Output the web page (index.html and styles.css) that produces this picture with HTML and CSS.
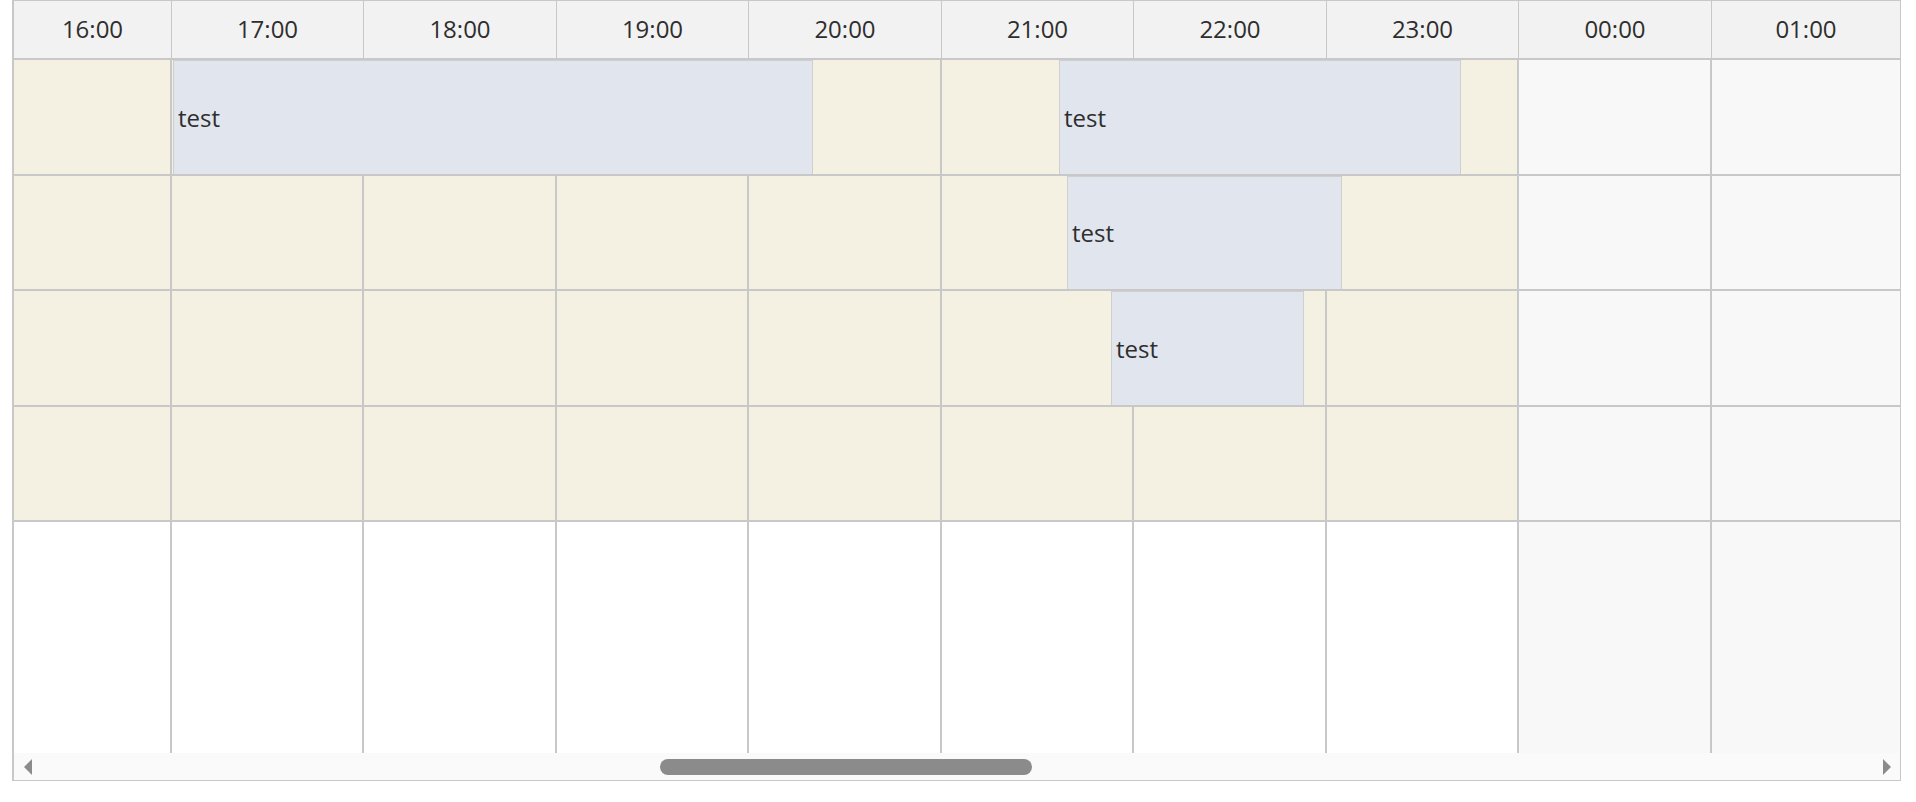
FILE: index.html
```html
<!DOCTYPE html>
<html>
<head>
<meta charset="utf-8">
<link rel="stylesheet" href="styles.css">
</head>
<body>
<div class="scheduler">
  <div class="head grid">
    <div class="hcell">16:00</div>
    <div class="hcell">17:00</div>
    <div class="hcell">18:00</div>
    <div class="hcell">19:00</div>
    <div class="hcell">20:00</div>
    <div class="hcell">21:00</div>
    <div class="hcell">22:00</div>
    <div class="hcell">23:00</div>
    <div class="hcell">00:00</div>
    <div class="hcell last">01:00</div>
  </div>
  <div class="content">
    <div class="row grid tall">
      <div class="cell work"></div><div class="cell work"></div><div class="cell work"></div><div class="cell work"></div><div class="cell work"></div><div class="cell work"></div><div class="cell work"></div><div class="cell work"></div><div class="cell off"></div><div class="cell off last"></div>
      <div class="event" style="left:159px;width:640px">test</div>
      <div class="event" style="left:1045px;width:402px">test</div>
    </div>
    <div class="row grid short">
      <div class="cell work"></div><div class="cell work"></div><div class="cell work"></div><div class="cell work"></div><div class="cell work"></div><div class="cell work"></div><div class="cell work"></div><div class="cell work"></div><div class="cell off"></div><div class="cell off last"></div>
      <div class="event" style="left:1053px;width:275px">test</div>
    </div>
    <div class="row grid tall">
      <div class="cell work"></div><div class="cell work"></div><div class="cell work"></div><div class="cell work"></div><div class="cell work"></div><div class="cell work"></div><div class="cell work"></div><div class="cell work"></div><div class="cell off"></div><div class="cell off last"></div>
      <div class="event" style="left:1097px;width:193px">test</div>
    </div>
    <div class="row grid short">
      <div class="cell work"></div><div class="cell work"></div><div class="cell work"></div><div class="cell work"></div><div class="cell work"></div><div class="cell work"></div><div class="cell work"></div><div class="cell work"></div><div class="cell off"></div><div class="cell off last"></div>
    </div>
    <div class="filler grid">
      <div class="cell"></div><div class="cell"></div><div class="cell"></div><div class="cell"></div><div class="cell"></div><div class="cell"></div><div class="cell"></div><div class="cell"></div><div class="cell off"></div><div class="cell off last"></div>
    </div>
  </div>
  <div class="hscroll">
    <span class="arrow arrow-left"></span>
    <span class="track"><span class="thumb"></span></span>
    <span class="arrow arrow-right"></span>
  </div>
</div>
</body>
</html>
```
FILE: styles.css
```css
* { box-sizing: border-box; }
html, body { margin: 0; padding: 0; background: #ffffff; }
body {
  font-family: "Open Sans", "Liberation Sans", sans-serif;
  font-size: 24px;
  color: #2e2e2e;
}
.scheduler {
  margin-left: 12px;
  width: 1889px;
  border-top: 1px solid #c8c8c8;
  border-left: 2px solid #c8c8c8;
  border-right: 1px solid #c8c8c8;
  border-bottom: 1px solid #c8c8c8;
  background: #ffffff;
}
.grid {
  display: grid;
  grid-template-columns: 158px 192px 193px 192px 193px 192px 193px 192px 193px 1fr;
}
.head {
  height: 59px;
  background: #f2f2f2;
  border-bottom: 2px solid #c8c8c8;
}
.hcell {
  display: flex;
  align-items: center;
  justify-content: center;
  border-right: 1px solid #c8c8c8;
  line-height: 1;
  padding-bottom: 1px;
}
.hcell.last { border-right: none; }
.row {
  position: relative;
  border-bottom: 2px solid #c8c8c8;
}
.row.tall { height: 116px; }
.row.short { height: 115px; }
.filler { height: 231px; }
.cell {
  border-right: 2px solid #c8c8c8;
  background: #ffffff;
}
.cell.work { background: #f4f1e2; }
.cell.off { background: #f8f8f8; }
.cell.last { border-right: none; }
.event {
  position: absolute;
  top: 0;
  bottom: 0;
  background: #e1e5ee;
  border: 1px solid #cfcfcf;
  border-bottom: none;
  display: flex;
  align-items: center;
  padding-left: 4px;
  padding-bottom: 1px;
  z-index: 1;
}
.hscroll {
  height: 27px;
  background: #fafafa;
  display: flex;
  align-items: center;
  padding-left: 10px;
  padding-right: 9px;
}
.arrow {
  width: 0;
  height: 0;
  border-top: 8px solid transparent;
  border-bottom: 8px solid transparent;
  flex: none;
}
.arrow-left { border-right: 8px solid #8b8b8b; }
.arrow-right { border-left: 8px solid #8b8b8b; }
.track {
  flex: 1;
  display: flex;
  align-items: center;
  height: 16px;
}
.thumb {
  display: block;
  margin-left: 628px;
  width: 372px;
  height: 16px;
  border-radius: 8px;
  background: #8b8b8b;
}
```
